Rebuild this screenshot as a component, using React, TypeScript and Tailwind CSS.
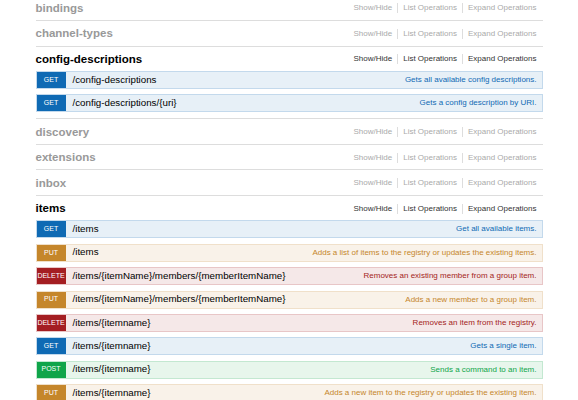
type Method = 'GET' | 'PUT' | 'DELETE' | 'POST';

interface Op {
    method: Method;
    path: string;
    summary: string;
}

interface Resource {
    name: string;
    ops?: Op[];
}

const methodStyles: Record<Method, { badge: string; row: string; text: string }> = {
    GET: {
        badge: 'bg-[#0f6ab4]',
        row: 'bg-[#e7f0f7] border-[#c3d9ec]',
        text: 'text-[#0f6ab4]',
    },
    PUT: {
        badge: 'bg-[#c5862b]',
        row: 'bg-[#f9f2e9] border-[#f0e0ca]',
        text: 'text-[#c5862b]',
    },
    DELETE: {
        badge: 'bg-[#a41e22]',
        row: 'bg-[#f5e8e8] border-[#e8c6c7]',
        text: 'text-[#a41e22]',
    },
    POST: {
        badge: 'bg-[#10a54a]',
        row: 'bg-[#e7f6ec] border-[#c3e8d1]',
        text: 'text-[#10a54a]',
    },
};

const resources: Resource[] = [
    { name: 'bindings' },
    { name: 'channel-types' },
    {
        name: 'config-descriptions',
        ops: [
            { method: 'GET', path: '/config-descriptions', summary: 'Gets all available config descriptions.' },
            { method: 'GET', path: '/config-descriptions/{uri}', summary: 'Gets a config description by URI.' },
        ],
    },
    { name: 'discovery' },
    { name: 'extensions' },
    { name: 'inbox' },
    {
        name: 'items',
        ops: [
            { method: 'GET', path: '/items', summary: 'Get all available items.' },
            { method: 'PUT', path: '/items', summary: 'Adds a list of items to the registry or updates the existing items.' },
            { method: 'DELETE', path: '/items/{itemName}/members/{memberItemName}', summary: 'Removes an existing member from a group item.' },
            { method: 'PUT', path: '/items/{itemName}/members/{memberItemName}', summary: 'Adds a new member to a group item.' },
            { method: 'DELETE', path: '/items/{itemname}', summary: 'Removes an item from the registry.' },
            { method: 'GET', path: '/items/{itemname}', summary: 'Gets a single item.' },
            { method: 'POST', path: '/items/{itemname}', summary: 'Sends a command to an item.' },
            { method: 'PUT', path: '/items/{itemname}', summary: 'Adds a new item to the registry or updates the existing item.' },
        ],
    },
];

function OperationRow({ op }: { op: Op }) {
    const s = methodStyles[op.method];
    return (
        <div className={`h-[18px] flex items-stretch border ${s.row}`}>
            <div
                className={`w-[29px] shrink-0 flex items-center justify-center text-white text-[7px] uppercase overflow-hidden ${s.badge}`}
            >
                {op.method}
            </div>
            <div className="pl-[7px] flex items-center text-[9.75px] text-black">{op.path}</div>
            <div className={`ml-auto pr-[5px] flex items-center text-[8px] ${s.text}`}>{op.summary}</div>
        </div>
    );
}

function ResourceBlock({ res }: { res: Resource }) {
    const open = !!res.ops;
    const actions = ['Show/Hide', 'List Operations', 'Expand Operations'];
    return (
        <div className="border-b border-[#dddddd]">
            <div className="h-[24.5px] flex items-center pt-[1px]">
                <h2 className={`text-[11.5px] font-bold ${open ? 'text-black' : 'text-[#999999]'}`}>{res.name}</h2>
                <ul className={`ml-auto pr-[6px] flex text-[8px] ${open ? 'text-[#333333]' : 'text-[#aaaaaa]'}`}>
                    {actions.map((a, i) => (
                        <li
                            key={a}
                            className={`px-[5px] leading-[10px] ${i < actions.length - 1 ? 'border-r border-[#dddddd]' : 'pr-0'}`}
                        >
                            {a}
                        </li>
                    ))}
                </ul>
            </div>
            {open && (
                <div className="flex flex-col gap-[5.4px] pb-[6px]">
                    {res.ops!.map((op, i) => (
                        <OperationRow key={i} op={op} />
                    ))}
                </div>
            )}
        </div>
    );
}

export default function App() {
    return (
        <div className="bg-white min-h-screen font-['Liberation_Sans',Arial,sans-serif]">
            <div className="w-[507px] mx-auto -mt-[4.5px]">
                {resources.map((r) => (
                    <ResourceBlock key={r.name} res={r} />
                ))}
            </div>
        </div>
    );
}
